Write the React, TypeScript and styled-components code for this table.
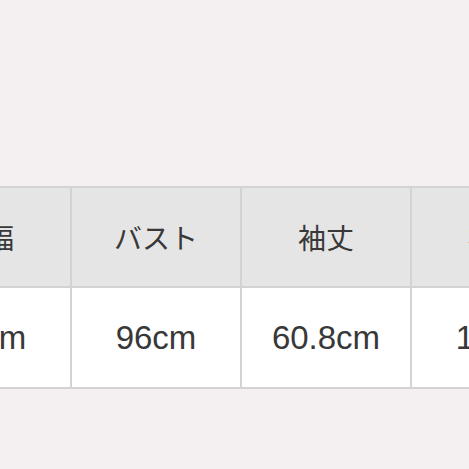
import { FC } from "react";
import styled, { createGlobalStyle } from "styled-components";

type Column = {
  label: string;
  value: string;
};

const columns: Column[] = [
  { label: "肩幅", value: "42cm" },
  { label: "バスト", value: "96cm" },
  { label: "袖丈", value: "60.8cm" },
  { label: "袖口", value: "13cm" },
];

const App: FC = () => {
  return (
    <>
      <GlobalStyle />
      <Page>
        <SizeTable>
          {columns.map((col) => (
            <HeadCell key={col.label}>{col.label}</HeadCell>
          ))}
          {columns.map((col) => (
            <ValueCell key={col.label + "-v"}>{col.value}</ValueCell>
          ))}
        </SizeTable>
      </Page>
    </>
  );
};

const GlobalStyle = createGlobalStyle`
  html, body {
    margin: 0;
    padding: 0;
    background: #f4f0f1;
  }
  body {
    font-family: "Liberation Sans", "Noto Sans CJK JP", sans-serif;
  }
`;

const Page = styled.div({
  width: 469,
  height: 469,
  overflow: "hidden",
  paddingTop: 186,
  boxSizing: "border-box",
});

const SizeTable = styled.div({
  display: "grid",
  gridTemplateColumns: "repeat(4, 168px)",
  gridTemplateRows: "98px 99px",
  gap: 2,
  padding: 2,
  width: "max-content",
  marginLeft: -100,
  background: "#d3d3d3",
});

const HeadCell = styled.div({
  display: "flex",
  alignItems: "center",
  justifyContent: "center",
  background: "#e5e5e5",
  color: "#383838",
  fontSize: 28,
  whiteSpace: "nowrap",
});

const ValueCell = styled(HeadCell)({
  background: "#ffffff",
  fontSize: 33,
});

export default App;
